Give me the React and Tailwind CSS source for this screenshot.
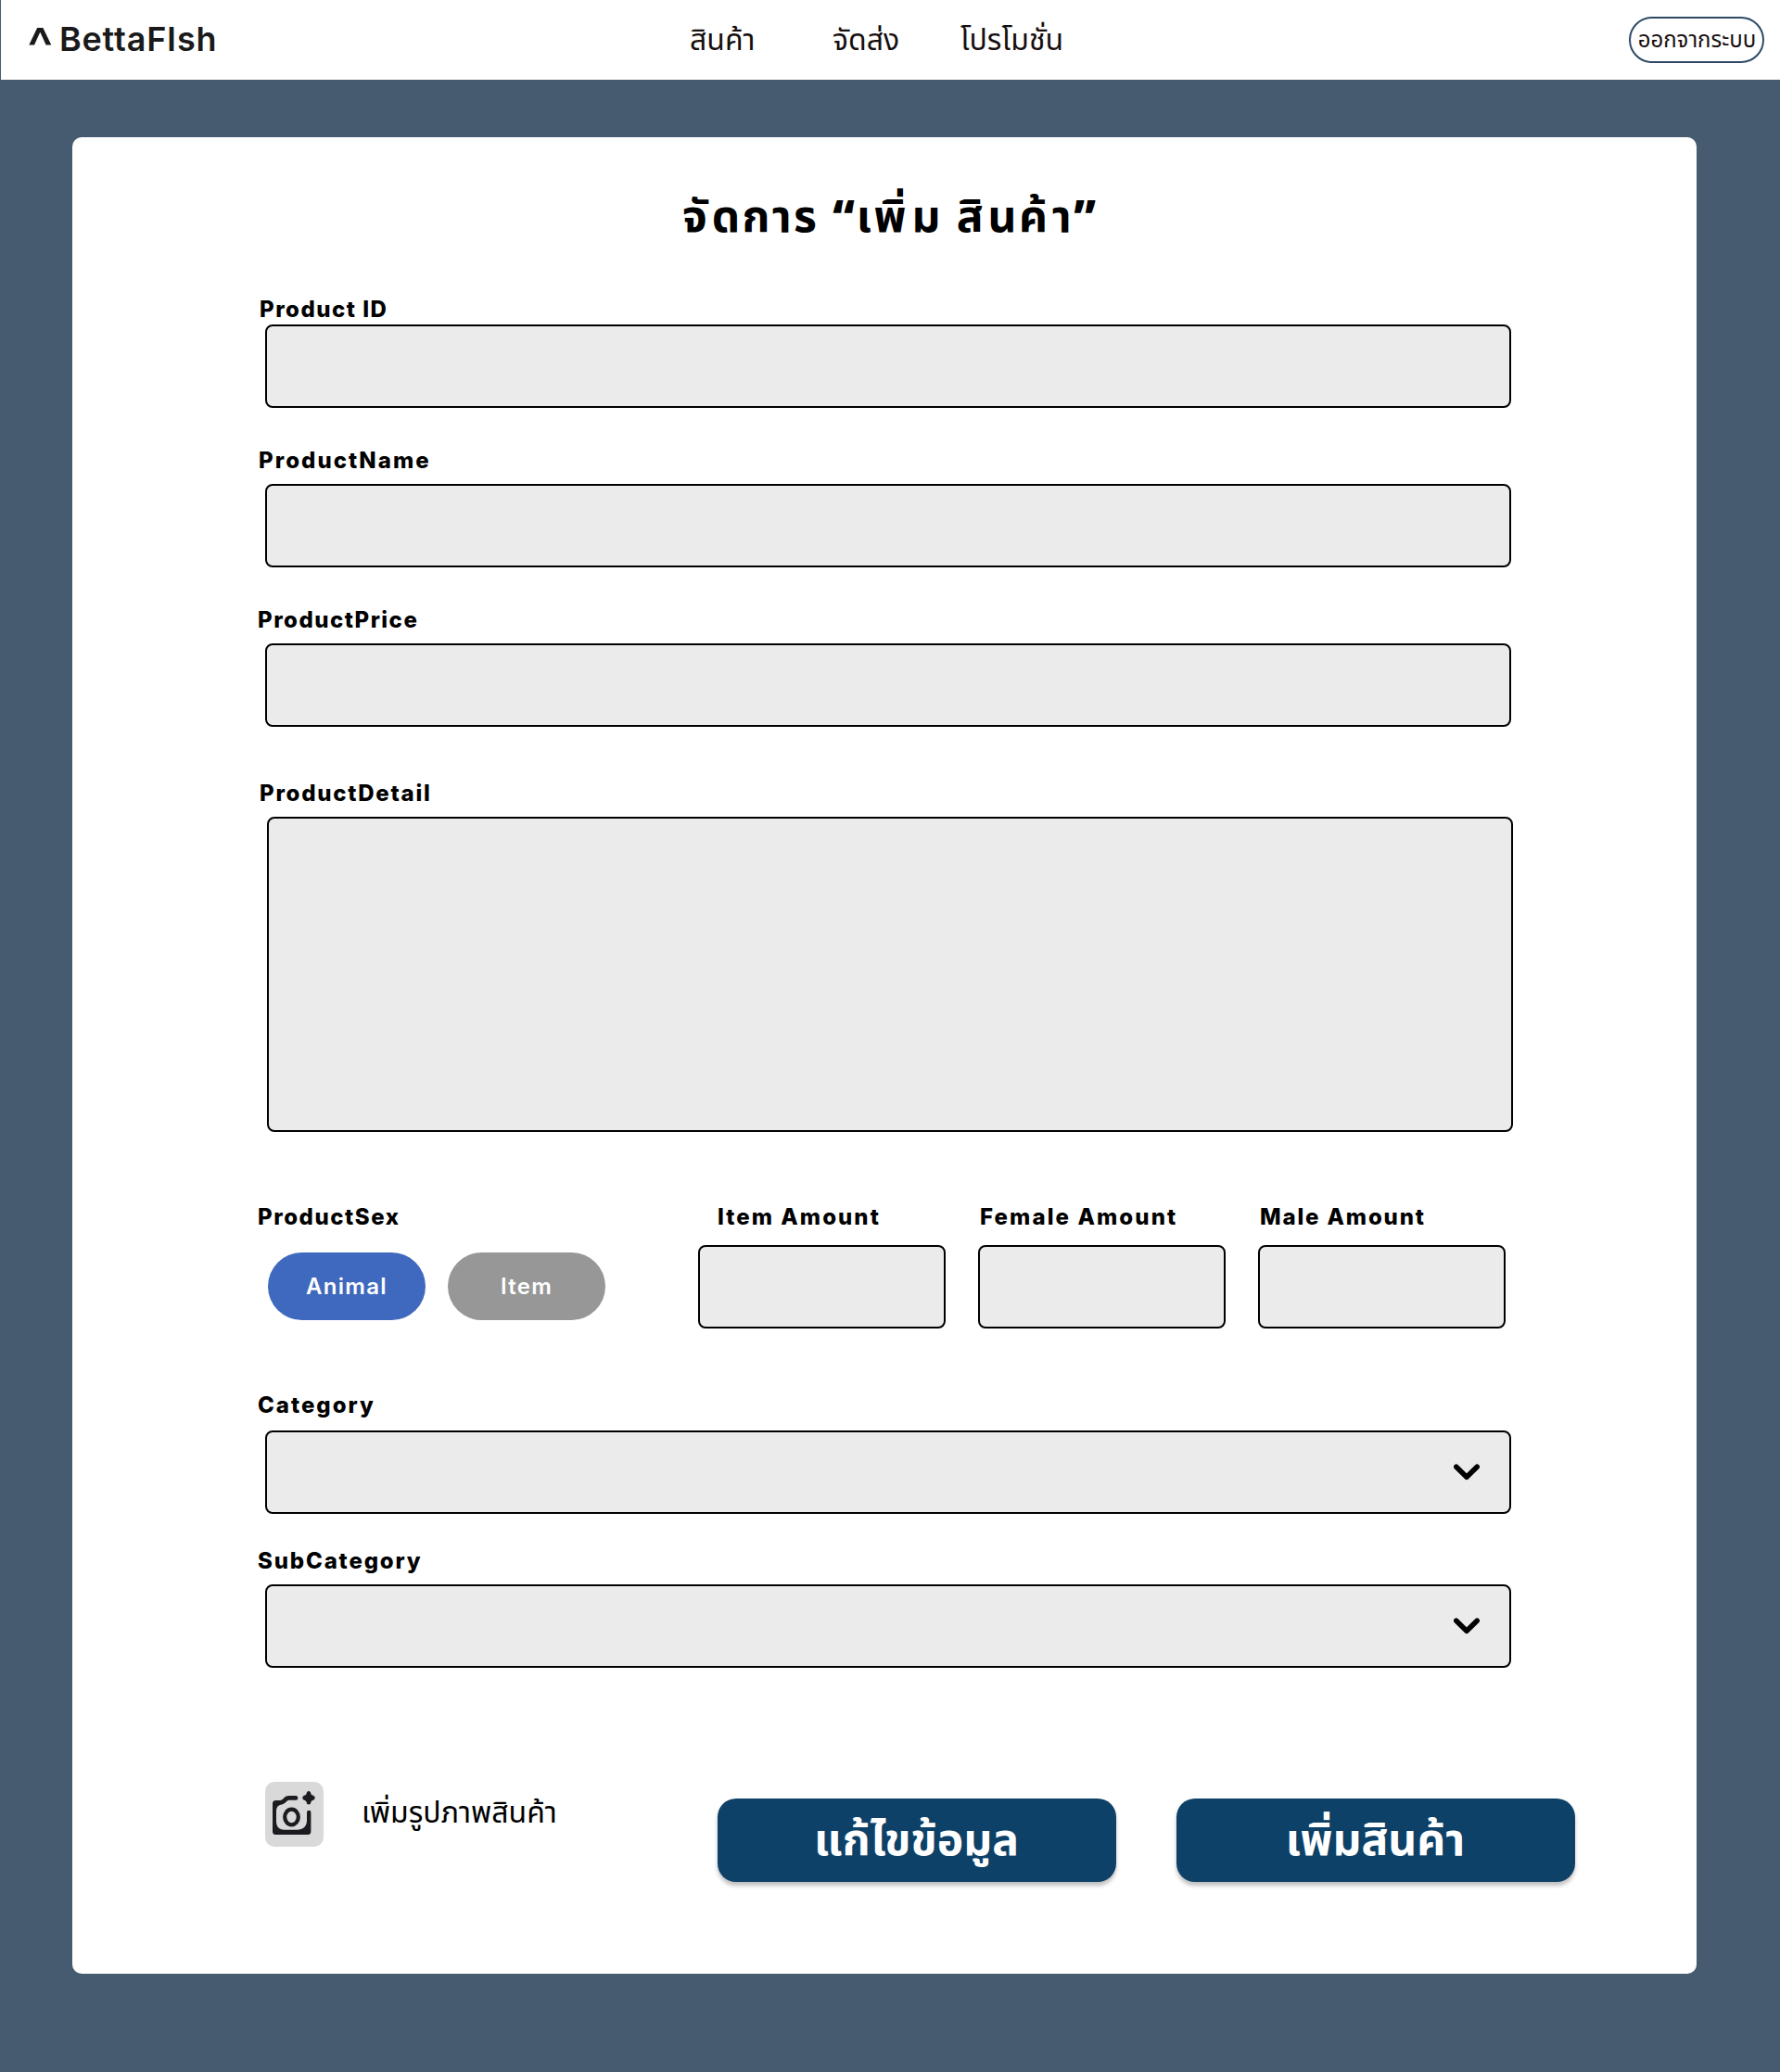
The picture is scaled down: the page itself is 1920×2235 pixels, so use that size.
import React from 'react';

const latin = "font-['Inter','Noto_Sans_Thai','Noto_Sans',sans-serif]";
const thai = "font-['Noto_Sans_Thai','Noto_Sans',sans-serif]";

function Label({ children, className = '' }) {
  return (
    <div className={`h-6 whitespace-nowrap text-2xl leading-6 font-extrabold text-black ${className}`}>
      {children}
    </div>
  );
}

function Field({ className = '', children }) {
  return (
    <div className={`flex items-center justify-end rounded-lg border-2 border-black bg-[#ebebeb] ${className}`}>
      {children}
    </div>
  );
}

function Chevron() {
  return (
    <svg className="mr-8 h-[18px] w-7" viewBox="0 0 28 18" fill="none">
      <path d="M2.8 3.2 14 14.2 25.2 3.2" stroke="#000" strokeWidth="5.6" strokeLinecap="round" strokeLinejoin="round" />
    </svg>
  );
}

function CameraPlus() {
  return (
    <svg className="h-[70px] w-[63px]" viewBox="0 0 63 70" fill="none">
      <path
        fill="#1d1b20"
        fillRule="evenodd"
        d="M33 15a2.3 2.3 0 0 1 0 4.8h-7.500c-2 0-3.300 3.800-7.500 4.700-3.500 .6-6 2.500-6 7.500v10c0 6.500 3 9.700 8.500 9.700h14c6 0 10.500-3.500 10.500-10V33a2.200 2.200 0 0 1 4.400 0v20.500a3.500 3.500 0 0 1-3.500 3.500H11.500A3.500 3.500 0 0 1 8 53.500V23.500A3.500 3.500 0 0 1 11.500 20h4.500c3.500 0 4.500-5 9.500-5z"
      />
      <ellipse cx="28.500" cy="38" rx="7.300" ry="8.300" stroke="#1d1b20" strokeWidth="4.200" />
      <path
        fill="#1d1b20"
        d="M47 10c1.500 0 2 1 2.300 2.300.4 1.400.8 2 2 2.300 1.400.4 2.400 1.200 2.400 2.700s-1 2.300-2.400 2.700c-1.200.3-1.600.9-2 2.300-.3 1.300-.8 2.300-2.300 2.300s-2-1-2.300-2.300c-.4-1.400-.8-2-2-2.300-1.400-.4-2.400-1.200-2.400-2.700s1-2.300 2.400-2.700c1.200-.3 1.600-.9 2-2.300.3-1.300.8-2.300 2.300-2.300z"
      />
    </svg>
  );
}

export default function App() {
  return (
    <div className={`h-[2235px] w-[1920px] overflow-hidden bg-[#465b6f] ${latin}`}>
      <header className="ml-px flex h-[86px] items-center bg-white">
        <div className="ml-[28px] flex w-[715px] items-center whitespace-nowrap text-[#1a1a1a]">
          <span className="mt-[14px] w-[35px] text-[60px] leading-[60px] font-medium">^</span>
          <span className="-mt-0.5 text-[36px] leading-[44px] font-semibold tracking-[0.8px]">BettaFIsh</span>
        </div>
        <nav className={`mt-0.5 flex flex-1 text-[32px] leading-[44px] whitespace-nowrap text-[#170f0f] ${thai}`}>
          <span className="w-[154px]">สินค้า</span>
          <span className="w-[138px]">จัดส่ง</span>
          <span>โปรโมชั่น</span>
        </nav>
        <button className={`mr-[17px] flex h-[50px] w-[146px] items-center justify-center rounded-full border-2 border-[#2c4a66] pt-0.5 pl-px text-2xl whitespace-nowrap text-[#170f0f] ${thai}`}>
          ออกจากระบบ
        </button>
      </header>

      <main className="mt-[62px] ml-[78px] flex h-[1981px] w-[1752px] flex-col rounded-[10px] bg-white pl-[201px]">
        <h1 className={`mt-[53px] ml-[457px] h-[69px] text-[48px] leading-[70px] font-bold tracking-[2.4px] whitespace-nowrap text-black ${thai}`}>
          <span className="tracking-[4.8px]">จั</span>ดการ <span className="font-black tracking-[1.6px]">“</span>เ<span className="tracking-[6px]">พิ่</span>ม <span className="tracking-[4.8px]">สิ</span>น<span className="tracking-[4.8px]">ค้</span>า<span className="font-black">”</span>
        </h1>

        <Label className="mt-[52px] ml-px tracking-[1.5px]">Product ID</Label>
        <Field className="mt-1 ml-[7px] h-[90px] w-[1344px]" />

        <Label className="mt-[45px] tracking-[2.05px]">ProductName</Label>
        <Field className="mt-[13px] ml-[7px] h-[90px] w-[1344px]" />

        <Label className="mt-[45px] -ml-px tracking-[1.5px]">ProductPrice</Label>
        <Field className="mt-[13px] ml-[7px] h-[90px] w-[1344px]" />

        <Label className="mt-[60px] ml-px tracking-[1.75px]">ProductDetail</Label>
        <Field className="mt-[13px] ml-[9px] h-[340px] w-[1344px]" />

        <div className="mt-20 flex h-[132px]">
          <div className="w-[474px]">
            <Label className="-ml-px tracking-[1.55px]">ProductSex</Label>
            <div className="mt-[26px] ml-2.5 flex gap-6 text-2xl font-semibold tracking-[1.3px] text-white">
              <button className="h-[73px] w-[170px] rounded-full bg-[#3f69be] pt-px">Animal</button>
              <button className="h-[73px] w-[170px] rounded-full bg-[#979797] pt-px">Item</button>
            </div>
          </div>
          <div className="flex gap-[35px]">
            <div>
              <Label className="pl-[21px] tracking-[2.05px]">Item Amount</Label>
              <Field className="mt-[18px] h-[90px] w-[267px]" />
            </div>
            <div>
              <Label className="pl-0.5 tracking-[2.1px]">Female Amount</Label>
              <Field className="mt-[18px] h-[90px] w-[267px]" />
            </div>
            <div>
              <Label className="pl-0.5 tracking-[1.85px]">Male Amount</Label>
              <Field className="mt-[18px] h-[90px] w-[267px]" />
            </div>
          </div>
        </div>

        <Label className="mt-[71px] -ml-px tracking-[2px]">Category</Label>
        <Field className="mt-[15px] ml-[7px] h-[90px] w-[1344px]"><Chevron /></Field>

        <Label className="mt-[39px] -ml-px tracking-[1.85px]">SubCategory</Label>
        <Field className="mt-[13px] ml-[7px] h-[90px] w-[1344px]"><Chevron /></Field>

        <div className={`mt-[123px] ml-[7px] flex items-start ${thai}`}>
          <button className="h-[70px] w-[63px] rounded-[10px] bg-[#d9d9d9]"><CameraPlus /></button>
          <span className="mt-3 ml-[41px] w-[384px] text-[32px] leading-[44px] whitespace-nowrap text-black">เพิ่มรูปภาพสินค้า</span>
          <button className="mt-[18px] h-[90px] w-[430px] rounded-[20px] bg-[#0e4168] pt-[3px] pr-px text-[48px] leading-[87px] font-bold whitespace-nowrap text-white shadow-[0_4px_4px_rgba(0,0,0,0.25)]">แก้ไขข้อมูล</button>
          <button className="mt-[18px] ml-[65px] h-[90px] w-[430px] rounded-[20px] bg-[#0e4168] pt-[3px] pr-px text-[48px] leading-[87px] font-bold whitespace-nowrap text-white shadow-[0_4px_4px_rgba(0,0,0,0.25)]">เพิ่มสินค้า</button>
        </div>
      </main>
    </div>
  );
}
